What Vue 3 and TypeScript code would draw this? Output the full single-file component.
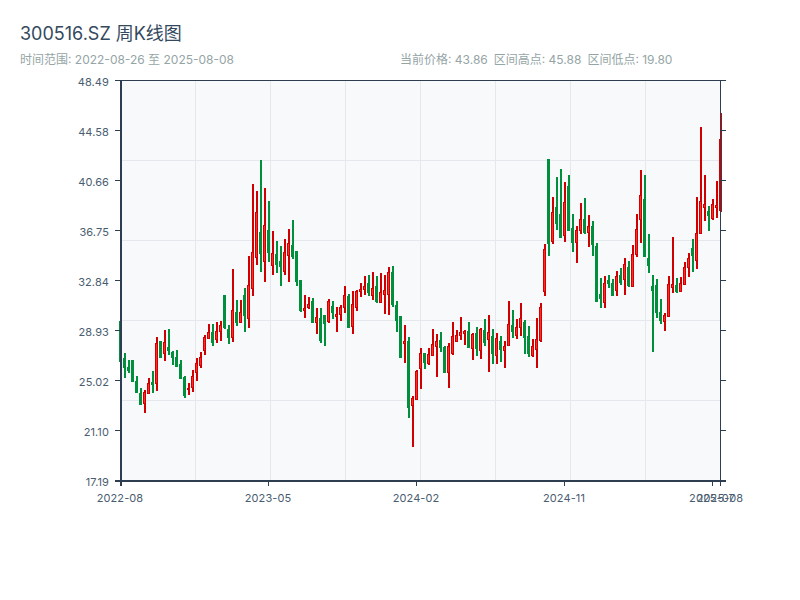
<script setup lang="ts">
type Row = [number, number, number, number, 0 | 1];
// high y, low y, body top y, body bottom y, 1 = rising (red)
const rows: Row[] = [
[321,361,321,361,0],[353,378,358,367,0],[360,373,367,370,0],[360,381,360,381,0],[376,392,381,392,0],[388,405,393,404,0],
[390,413,392,403,1],[378,394,383,393,1],[371,393,382,384,0],[337,391,343,383,1],[341,358,341,357,0],[330,361,342,353,1],
[329,355,347,350,0],[351,365,352,357,0],[350,366,357,366,0],[360,378,364,378,0],[376,398,377,395,0],[383,395,388,389,1],
[370,392,376,387,1],[358,381,363,372,1],[352,368,357,365,1],[335,355,337,350,1],[324,339,332,338,1],[324,346,332,342,0],
[322,343,331,339,1],[321,341,325,331,1],[295,329,295,327,0],[325,344,329,337,0],[269,342,310,337,1],[300,326,312,322,0],
[300,322,312,322,1],[288,332,295,315,0],[256,328,285,318,1],[184,296,252,288,1],[191,265,212,257,1],[160,272,232,253,0],
[188,282,225,261,1],[201,262,230,252,0],[231,275,253,265,1],[241,273,254,264,0],[246,286,261,266,0],[239,275,252,271,1],
[229,282,243,255,1],[220,259,245,256,0],[251,286,251,281,0],[280,312,280,310,0],[295,318,308,310,1],[297,309,304,307,1],
[298,322,301,322,0],[308,334,317,322,1],[308,343,318,340,0],[315,346,315,323,0],[299,323,301,321,1],[301,319,306,312,0],
[307,332,314,316,1],[305,321,307,314,1],[286,313,295,307,1],[294,327,296,327,0],[291,334,304,326,1],[290,311,291,307,1],
[283,297,289,291,1],[276,295,286,289,1],[275,296,283,292,0],[272,300,288,295,1],[276,303,286,301,0],[273,302,292,302,1],
[275,314,290,294,1],[267,315,272,294,1],[266,307,272,304,0],[301,332,305,320,0],[316,357,316,357,0],[325,363,341,343,1],
[337,418,341,407,0],[396,447,398,405,1],[370,399,371,399,1],[348,389,353,368,1],[353,369,353,362,0],[348,365,354,363,1],
[329,355,344,355,1],[334,377,341,346,1],[332,352,340,347,0],[346,372,347,372,0],[343,388,346,372,1],[322,355,336,353,1],
[330,341,335,341,1],[317,340,332,335,1],[330,345,331,333,1],[322,347,331,347,0],[333,360,334,348,1],[327,356,333,348,0],
[328,359,329,350,1],[319,346,330,342,0],[315,372,332,339,1],[329,364,336,353,0],[333,364,338,355,1],[336,362,341,349,0],
[341,368,346,350,1],[301,345,324,345,1],[310,338,325,331,0],[319,339,327,335,1],[303,336,318,327,1],[320,354,322,337,0],
[326,357,336,353,0],[339,357,346,355,1],[318,368,339,349,1],[303,342,307,340,1],[244,296,249,291,1],[159,256,159,243,0],
[197,244,212,241,1],[177,230,207,223,0],[169,238,214,237,0],[182,242,202,235,1],[175,231,186,230,0],[214,252,228,242,0],
[226,263,230,242,1],[203,234,219,230,1],[198,234,219,232,0],[215,247,226,232,1],[221,256,226,244,0],[243,302,246,301,0],
[278,308,294,298,0],[276,308,283,302,1],[275,288,280,283,0],[279,296,283,295,0],[271,296,276,290,1],[268,285,275,282,0],
[258,295,264,279,1],[261,287,267,285,0],[245,286,254,286,1],[214,257,229,254,1],[170,243,195,219,1],[175,257,199,256,0],
[234,273,258,265,0],[275,352,286,290,0],[279,318,285,312,0],[299,324,312,320,0],[313,331,315,321,1],[276,316,284,316,1],
[237,293,284,287,1],[278,293,285,291,0],[277,292,283,291,1],[262,285,267,284,1],[253,277,258,267,1],[239,272,248,255,0],
[197,269,233,260,1],[127,233,201,233,1],[175,221,204,207,1],[206,231,211,215,0],[199,220,204,218,1],[181,218,205,207,1],
[113,212,139,210,1],
];

const candles = rows.map((r, i) => ({
  x: 121 + 4 * i,
  high: r[0],
  low: r[1],
  top: r[2],
  height: Math.max(r[3] - r[2], 1),
  up: r[4] === 1,
}));

const yLabels = ["48.49", "44.58", "40.66", "36.75", "32.84", "28.93", "25.02", "21.10", "17.19"];
const yTicks = yLabels.map((text, i) => ({ text, y: 80 + i * 50 }));
const gridX = [195.5, 270.5, 345.5, 420.5, 495.5, 570.5, 645.5];
const gridY = [160.5, 240.5, 320.5, 400.5];
const xTicks = [
  { x: 120, text: "2022-08" },
  { x: 268, text: "2023-05" },
  { x: 416, text: "2024-02" },
  { x: 564, text: "2024-11" },
  { x: 712, text: "2025-07" },
  { x: 720, text: "2025-08" },
];
</script>

<template>
  <div class="page">
    <header class="head">
      <h1 class="title">300516.SZ 周K线图</h1>
      <div class="meta">
        <span class="range">时间范围: 2022-08-26 至 2025-08-08</span>
        <span class="stats">
          <span>当前价格: 43.86</span>
          <span>区间高点: 45.88</span>
          <span>区间低点: 19.80</span>
        </span>
      </div>
    </header>
    <svg class="chart" width="800" height="450" viewBox="0 70 800 450">
      <rect x="120" y="80" width="600" height="400" class="plot" />
      <line v-for="x in gridX" :key="'gx' + x" :x1="x" :x2="x" y1="80" y2="480" class="grid" />
      <line v-for="y in gridY" :key="'gy' + y" x1="120" x2="720" :y1="y" :y2="y" class="grid" />
      <g v-for="c in candles" :key="c.x">
        <line :x1="c.x" :x2="c.x" :y1="c.high" :y2="c.low" :class="c.up ? 'wick-up' : 'wick-down'" />
        <rect :x="c.x - 1.5" :y="c.top + 0.5" width="2" :height="c.height" :class="c.up ? 'body-up' : 'body-down'" />
      </g>
      <line x1="115" x2="726" y1="80.5" y2="80.5" class="axis" />
      <line x1="115" x2="726" y1="481" y2="481" class="axis thick" />
      <line x1="121" x2="121" y1="80" y2="486" class="axis thick" />
      <line x1="720.5" x2="720.5" y1="80" y2="486" class="axis" />
      <g v-for="t in yTicks" :key="t.text">
        <line x1="115" x2="120" :y1="t.y + 0.5" :y2="t.y + 0.5" class="axis" />
        <line x1="720" x2="726" :y1="t.y + 0.5" :y2="t.y + 0.5" class="axis" />
        <text x="109" :y="t.y + 5.5" text-anchor="end" class="tick">{{ t.text }}</text>
      </g>
      <g v-for="t in xTicks" :key="t.text">
        <line :x1="t.x + 0.5" :x2="t.x + 0.5" y1="480" y2="486" class="axis" />
        <text :x="t.x" y="502" text-anchor="middle" class="tick">{{ t.text }}</text>
      </g>
    </svg>
  </div>
</template>

<style scoped>
.page {
  width: 800px;
  height: 600px;
  background: #fff;
  font-family: Inter, "Noto Sans CJK SC", sans-serif;
  overflow: hidden;
}
.head {
  height: 70px;
  padding: 23px 20px 0;
  box-sizing: border-box;
}
.title {
  margin: 0;
  font-size: 18px;
  font-weight: 400;
  line-height: 22px;
  color: #34495e;
}
.meta {
  display: flex;
  margin-top: 7px;
  font-size: 12px;
  line-height: 16px;
  color: #95a5a6;
}
.range {
  width: 380px;
}
.stats {
  display: flex;
  gap: 6px;
}
.chart {
  display: block;
}
.plot {
  fill: #f8f9fb;
}
.grid {
  stroke: #e4e7ec;
  stroke-width: 1;
}
.wick-up {
  stroke: #d00000;
  stroke-width: 2;
}
.wick-down {
  stroke: #008f3a;
  stroke-width: 2;
}
.body-up {
  fill: #ff2a2a;
  stroke: #d00000;
  stroke-width: 1;
}
.body-down {
  fill: #008f3a;
  stroke: #008f3a;
  stroke-width: 1;
}
.axis {
  stroke: #2c3e50;
  stroke-width: 1;
}
.thick {
  stroke-width: 2;
}
.tick {
  font-size: 11px;
  fill: #4a5d70;
  letter-spacing: 0.1px;
}
</style>
